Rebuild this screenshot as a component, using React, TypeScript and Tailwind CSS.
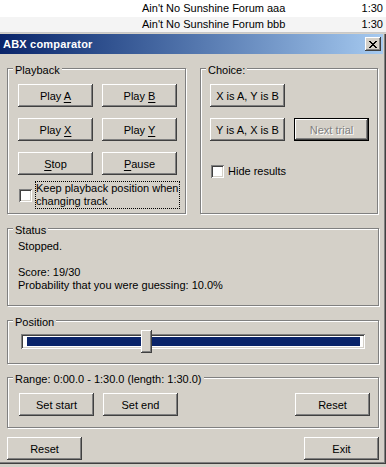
import React from "react";

const raised =
  "bg-[#d4d0c8] shadow-[inset_-1px_-1px_#404040,inset_1px_1px_#ffffff,inset_-2px_-2px_#808080,inset_2px_2px_#d4d0c8]";
const sunken =
  "bg-white shadow-[inset_1px_1px_#808080,inset_-1px_-1px_#ffffff,inset_2px_2px_#404040,inset_-2px_-2px_#d4d0c8]";

function Btn({
  children,
  isDefault,
  disabled,
}: {
  children: React.ReactNode;
  isDefault?: boolean;
  disabled?: boolean;
}) {
  const text = disabled
    ? "text-[#808080] [text-shadow:1px_1px_0_#ffffff]"
    : "text-black";
  if (isDefault) {
    return (
      <div className="w-[75px] h-[23px] border border-black flex shrink-0">
        <div
          className={`flex-1 flex items-center justify-center pt-[1px] ${raised} ${text}`}
        >
          <span className="whitespace-pre">{children}</span>
        </div>
      </div>
    );
  }
  return (
    <div
      className={`w-[75px] h-[23px] shrink-0 flex items-center justify-center pt-[1px] ${raised} ${text}`}
    >
      <span className="whitespace-pre">{children}</span>
    </div>
  );
}

function U({ children }: { children: React.ReactNode }) {
  return <span className="underline underline-offset-[2px]">{children}</span>;
}

function Check() {
  return <div className={`w-[13px] h-[13px] shrink-0 ${sunken}`} />;
}

function Group({
  label,
  className = "",
  children,
}: {
  label: string;
  className?: string;
  children?: React.ReactNode;
}) {
  return (
    <div
      className={`relative shrink-0 border border-[#808080] shadow-[inset_1px_1px_#ffffff,1px_1px_#ffffff] ${className}`}
    >
      <span className="absolute left-[5px] -top-[5px] px-[2px] bg-[#d4d0c8] leading-[13px] whitespace-nowrap">
        {label}
      </span>
      {children}
    </div>
  );
}

function CloseGlyph() {
  const rows = [
    "XX....XX",
    ".XX..XX.",
    "..XXXX..",
    "...XX...",
    "..XXXX..",
    ".XX..XX.",
    "XX....XX",
  ];
  const rects: React.ReactNode[] = [];
  rows.forEach((r, y) =>
    r.split("").forEach((c, x) => {
      if (c === "X")
        rects.push(<rect key={`${x}-${y}`} x={x} y={y} width={1} height={1} fill="#000" />);
    })
  );
  return (
    <svg width="8" height="7" viewBox="0 0 8 7" shapeRendering="crispEdges">
      {rects}
    </svg>
  );
}

export default function App() {
  return (
    <div className="w-[386px] h-[467px] bg-[#d4d0c8] overflow-hidden text-[11px] leading-[13px] text-black font-['Liberation_Sans',Arial,sans-serif]">
      {/* background playlist rows */}
      <div className="h-[17px] bg-white flex items-center pl-[142px] pr-[3px]">
        <span className="flex-1">Ain't No Sunshine Forum aaa</span>
        <span>1:30</span>
      </div>
      <div className="h-[15px] bg-[#f4f4f4] flex items-center pl-[142px] pr-[3px]">
        <span className="flex-1">Ain't No Sunshine Forum bbb</span>
        <span>1:30</span>
      </div>
      <div className="h-[1px] bg-[#c8c8c8]" />
      <div className="h-[1px] bg-[#d4d0c8]" />

      {/* dialog window */}
      <div className="w-[386px] h-[430px] flex flex-col pr-[3px] shadow-[inset_-1px_-1px_#404040,inset_-2px_-2px_#808080]">
        {/* caption */}
        <div className="h-[20px] shrink-0 flex items-center pl-[3px] pr-[2px] bg-gradient-to-r from-[#0a246a] to-[#a6caf0]">
          <span className="font-bold text-white tracking-[0.2px]">ABX comparator</span>
          <div className={`ml-auto w-[16px] h-[14px] flex items-center justify-center ${raised}`}>
            <CloseGlyph />
          </div>
        </div>

        {/* body */}
        <div className="flex-1 flex flex-col pl-[7px] pr-[4px] pt-[14px]">
          <div className="flex gap-[14px]">
            <Group label="Playback" className="w-[179px] h-[146px] pt-[15px] pl-[10px]">
              <div className="grid grid-cols-[75px_75px] gap-x-[9px] gap-y-[11px]">
                <Btn>
                  Play <U>A</U>
                </Btn>
                <Btn>
                  Play <U>B</U>
                </Btn>
                <Btn>
                  Play <U>X</U>
                </Btn>
                <Btn>
                  Play <U>Y</U>
                </Btn>
                <Btn>
                  <U>S</U>top
                </Btn>
                <Btn>
                  <U>P</U>ause
                </Btn>
              </div>
              <div className="mt-[6px] ml-[1px] flex items-center">
                <Check />
                <div className="ml-[3px] w-[145px] h-[28px] border border-dotted border-black whitespace-nowrap">
                  Keep playback position when
                  <br />
                  changing track
                </div>
              </div>
            </Group>

            <Group label="Choice:" className="w-[178px] h-[146px] pt-[15px] pl-[9px]">
              <Btn>X is A, Y is B</Btn>
              <div className="mt-[11px] flex gap-[9px]">
                <Btn>Y is A, X is B</Btn>
                <Btn isDefault disabled>
                  Next trial
                </Btn>
              </div>
              <div className="mt-[23px] ml-[1px] flex items-center">
                <Check />
                <div className="ml-[3px] h-[15px] border border-transparent whitespace-nowrap">
                  Hide results
                </div>
              </div>
            </Group>
          </div>

          <Group label="Status" className="mt-[14px] h-[78px] pt-[11px] pl-[10px]">
            <div>Stopped.</div>
            <div className="h-[13px]" />
            <div>Score: 19/30</div>
            <div>Probability that you were guessing: 10.0%</div>
          </Group>

          <Group label="Position" className="mt-[14px] h-[44px] pt-[13px] px-[13px]">
            <div className={`relative h-[15px] pt-[3px] pb-[3px] pl-[6px] pr-[5px] ${sunken}`}>
              <div className="h-[9px] bg-[#0a246a]" />
              <div className={`absolute left-[120px] -top-[4px] w-[11px] h-[23px] ${raised}`} />
            </div>
          </Group>

          <Group
            label="Range: 0:00.0 - 1:30.0 (length: 1:30.0)"
            className="mt-[13px] h-[51px] pt-[15px] pl-[11px] pr-[8px]"
          >
            <div className="flex gap-[9px]">
              <Btn>Set start</Btn>
              <Btn>Set end</Btn>
              <div className="ml-auto">
                <Btn>Reset</Btn>
              </div>
            </div>
          </Group>

          <div className="mt-[9px] flex justify-between">
            <Btn>Reset</Btn>
            <Btn>Exit</Btn>
          </div>
        </div>
      </div>
    </div>
  );
}
